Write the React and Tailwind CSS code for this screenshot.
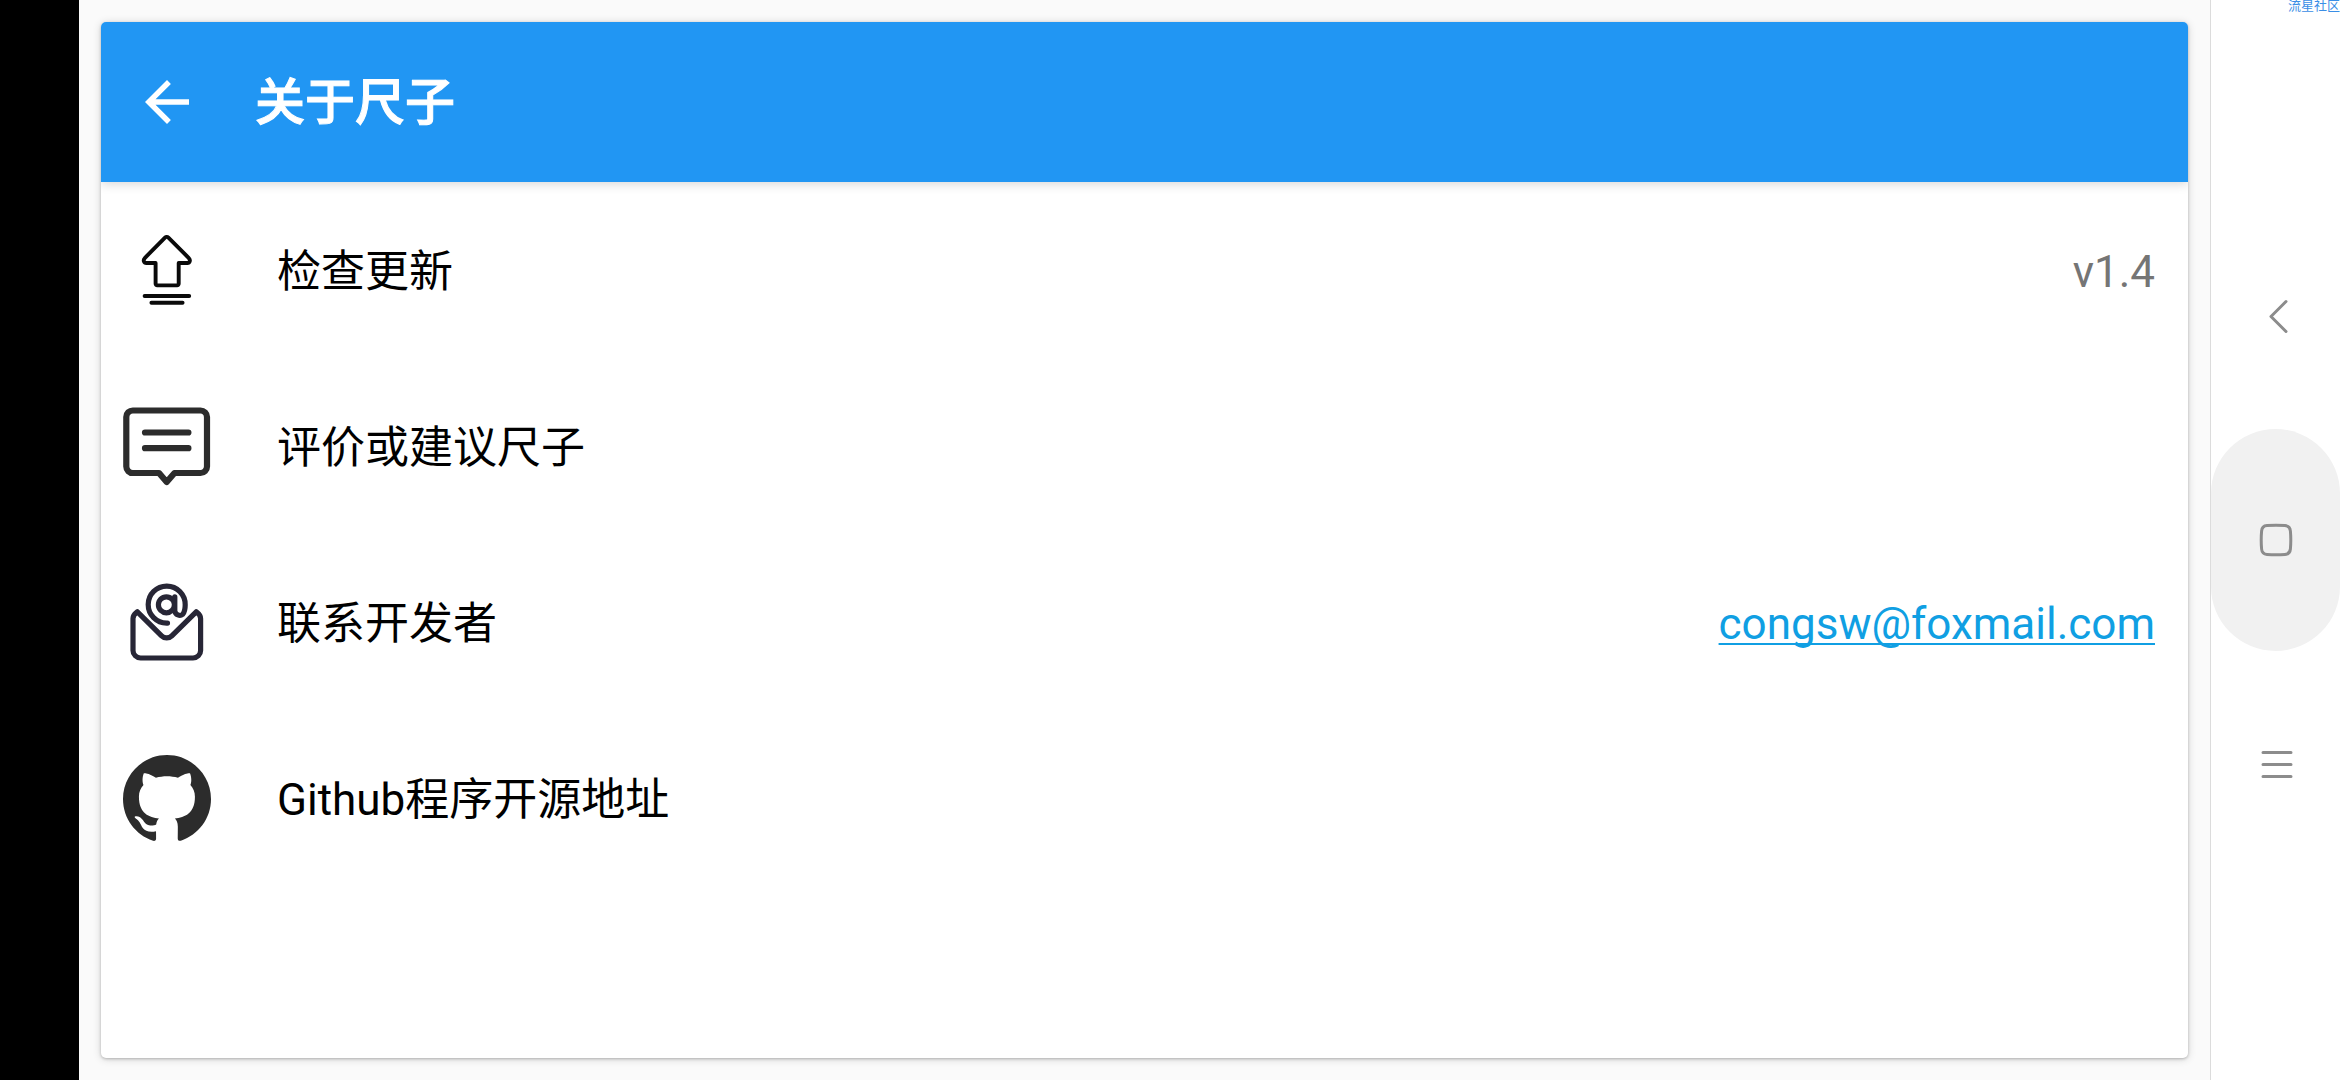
import { MdArrowBack } from 'react-icons/md'
import { SiGithub } from 'react-icons/si'

function UpdateIcon() {
  return (
    <svg viewBox="0 0 88 88" className="size-[88px]" fill="none" stroke="#0a0a0a" strokeWidth="3.9" strokeLinecap="round" strokeLinejoin="round" aria-hidden="true">
      <path d="M42 11.6a2.4 2.4 0 0 1 3.4 0L65.6 31.8c2.4 2.4 1 5.2-1.2 5.2H55.7v20.8a1.6 1.6 0 0 1-1.6 1.6H34.2a1.6 1.6 0 0 1-1.6-1.6V37H23.4c-2.4 0-3.8-2.8-1.4-5.2Z" />
      <path d="M21.600 70h44.600M28.400 76.700h31.200" />
    </svg>
  )
}

function CommentIcon() {
  return (
    <svg viewBox="0 0 88 88" className="size-[88px]" fill="none" stroke="#2c2c2c" strokeWidth="6.2" strokeLinecap="round" strokeLinejoin="round" aria-hidden="true">
      <path d="M10 8.500h67.500a6.500 6.500 0 0 1 6.500 6.500V64.500a6.500 6.500 0 0 1-6.500 6.500H51.500L43.700 80 36 71H10A6.500 6.500 0 0 1 3.300 64.500V15A6.500 6.500 0 0 1 10 8.500Z" />
      <path d="M22 30.500h43.400M22 46.200h43.400" />
    </svg>
  )
}

function MailIcon() {
  return (
    <svg viewBox="0 0 88 88" className="size-[88px]" fill="none" stroke="#272636" strokeWidth="5.2" strokeLinecap="round" strokeLinejoin="round" aria-hidden="true">
      <path d="M14.400 33.800 38.600 57.800a7.200 7.200 0 0 0 10.200 0L73.200 33.800C75 35.400 77.600 36.800 77.600 40.400V72.400a7.600 7.600 0 0 1-7.600 7.600H17.600A7.600 7.600 0 0 1 10 72.400V40.400c0-3.600 2.600-5 4.400-6.600Z" />
      <circle cx="43.400" cy="26.800" r="8" />
      <path d="M51.800 18.800V33a5 5 0 0 0 8 3.200C61.600 34 62.200 30.400 62.200 26.800A18.500 18.500 0 1 0 43.700 45.100h.8" />
    </svg>
  )
}

const rows = [
  { label: '检查更新', icon: <UpdateIcon />, value: 'v1.4' },
  { label: '评价或建议尺子', icon: <CommentIcon /> },
  { label: '联系开发者', icon: <MailIcon />, email: 'congsw@foxmail.com' },
  { label: 'Github程序开源地址', icon: <SiGithub size={88} color="#2c2c2c" aria-hidden="true" /> },
]

function Row({ label, icon, value, email }) {
  return (
    <li className="flex h-[176px] items-center pr-[33px] pl-[22px]">
      <button type="button" className="flex flex-1 items-center gap-[66px] text-left text-black">
        {icon}
        <span className="pt-1">{label}</span>
      </button>
      {value && <span className="pt-1 text-[#757575]">{value}</span>}
      {email && (
        <a href={`mailto:${email}`} className="pt-1 text-[#109fe3] underline decoration-2 underline-offset-4 [text-decoration-skip-ink:none]">
          {email}
        </a>
      )}
    </li>
  )
}

function NavBar() {
  return (
    <nav className="relative flex w-[130px] shrink-0 flex-col justify-center gap-[2px] border-l border-[#dcdcdc] bg-white">
      <span className="absolute top-0 right-0 text-[13px] leading-[12px] whitespace-nowrap text-[#3a8ee6]">流星社区</span>
      <button type="button" aria-label="返回" className="flex h-[222px] items-center justify-center rounded-full">
        <svg viewBox="0 0 34 34" className="size-[34px]" fill="none" stroke="#8c8c8c" strokeWidth="3" strokeLinecap="round" strokeLinejoin="round">
          <path d="M27 2.500 12 17.500 27 32.500" />
        </svg>
      </button>
      <button type="button" aria-label="主屏幕" className="flex h-[222px] items-center justify-center rounded-full bg-[#f1f1f1]">
        <svg viewBox="0 0 34 34" className="size-[34px]" fill="none" stroke="#8c8c8c" strokeWidth="3">
          <path d="M8 2.600Q17 1.800 26 2.600 31 3 31.400 8 32.200 17 31.400 26 31 31 26 31.400 17 32.200 8 31.400 3 31 2.600 26 1.800 17 2.600 8 3 3 8 2.600Z" />
        </svg>
      </button>
      <button type="button" aria-label="菜单" className="flex h-[222px] items-center justify-center rounded-full">
        <svg viewBox="0 0 34 34" className="size-[34px]" fill="none" stroke="#8c8c8c" strokeWidth="3" strokeLinecap="round">
          <path d="M4 5.500h28M4 17.500h28M4 29.500h28" />
        </svg>
      </button>
    </nav>
  )
}

export default function App() {
  return (
    <div className="flex min-h-screen bg-[#fafafa] font-[Roboto,'Noto_Sans_CJK_SC',sans-serif] text-[44px] leading-[52px]">
      <div className="w-[79px] shrink-0 bg-black" />
      <main className="flex min-w-0 flex-1 p-[22px]">
        <section className="flex-1 overflow-hidden rounded-[5px] bg-white shadow-[0_1px_8px_rgba(0,0,0,0.16),0_1px_3px_rgba(0,0,0,0.22)]">
          <header className="flex h-40 items-center gap-[55px] bg-[#2196f3] pl-[33px] text-white shadow-[0_2px_10px_rgba(0,0,0,0.16)]">
            <button type="button" aria-label="返回">
              <MdArrowBack size={66} />
            </button>
            <h1 className="pt-[2px] text-[50px] leading-[60px] font-medium [-webkit-text-stroke:1px_white]">关于尺子</h1>
          </header>
          <ul>
            {rows.map(row => (
              <Row key={row.label} {...row} />
            ))}
          </ul>
        </section>
      </main>
      <NavBar />
    </div>
  )
}
